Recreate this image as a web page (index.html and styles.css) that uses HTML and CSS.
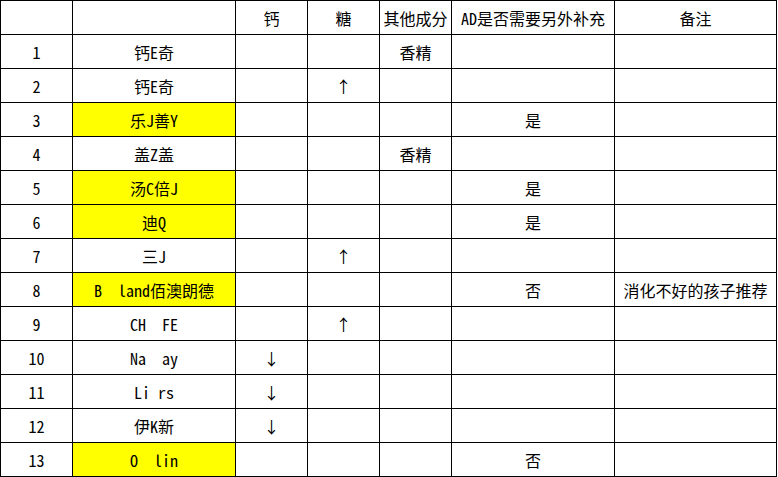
FILE: index.html
```html
<!DOCTYPE html>
<html lang="zh">
<head>
<meta charset="utf-8">
<link rel="stylesheet" href="styles.css">
</head>
<body>
<div class="sheet">
  <div class="c"></div><div class="c"></div><div class="c">钙</div><div class="c">糖</div><div class="c">其他成分</div><div class="c">AD是否需要另外补充</div><div class="c">备注</div>
  <div class="c">1</div><div class="c">钙E奇</div><div class="c"></div><div class="c"></div><div class="c">香精</div><div class="c"></div><div class="c"></div>
  <div class="c">2</div><div class="c">钙E奇</div><div class="c"></div><div class="c">↑</div><div class="c"></div><div class="c"></div><div class="c"></div>
  <div class="c">3</div><div class="c hl">乐J善Y</div><div class="c"></div><div class="c"></div><div class="c"></div><div class="c">是</div><div class="c"></div>
  <div class="c">4</div><div class="c">盖Z盖</div><div class="c"></div><div class="c"></div><div class="c">香精</div><div class="c"></div><div class="c"></div>
  <div class="c">5</div><div class="c hl">汤C倍J</div><div class="c"></div><div class="c"></div><div class="c"></div><div class="c">是</div><div class="c"></div>
  <div class="c">6</div><div class="c hl">迪Q</div><div class="c"></div><div class="c"></div><div class="c"></div><div class="c">是</div><div class="c"></div>
  <div class="c">7</div><div class="c">三J</div><div class="c"></div><div class="c">↑</div><div class="c"></div><div class="c"></div><div class="c"></div>
  <div class="c">8</div><div class="c hl">B  land佰澳朗德</div><div class="c"></div><div class="c"></div><div class="c"></div><div class="c">否</div><div class="c">消化不好的孩子推荐</div>
  <div class="c">9</div><div class="c">CH  FE</div><div class="c"></div><div class="c">↑</div><div class="c"></div><div class="c"></div><div class="c"></div>
  <div class="c">10</div><div class="c">Na  ay</div><div class="c">↓</div><div class="c"></div><div class="c"></div><div class="c"></div><div class="c"></div>
  <div class="c">11</div><div class="c">Li rs</div><div class="c">↓</div><div class="c"></div><div class="c"></div><div class="c"></div><div class="c"></div>
  <div class="c">12</div><div class="c">伊K新</div><div class="c">↓</div><div class="c"></div><div class="c"></div><div class="c"></div><div class="c"></div>
  <div class="c">13</div><div class="c hl">O  lin</div><div class="c"></div><div class="c"></div><div class="c"></div><div class="c">否</div><div class="c"></div>
</div>
</body>
</html>
```

FILE: styles.css
```css
html, body {
  margin: 0;
  padding: 0;
  background: #ffffff;
}

.sheet {
  display: grid;
  grid-template-columns: 71px 162px 71px 71px 71px 162px 161px;
  grid-auto-rows: 33px;
  gap: 1px;
  padding: 1px;
  width: max-content;
  background: #000000;
  font-family: "Noto Sans Mono CJK SC", "Liberation Mono", "Noto Sans CJK SC", monospace;
  font-size: 16px;
  color: #000000;
}

.c {
  background: #ffffff;
  display: flex;
  align-items: center;
  justify-content: center;
  white-space: pre;
  line-height: 1;
  overflow: hidden;
}

.hl {
  background: #ffff00;
}
```
